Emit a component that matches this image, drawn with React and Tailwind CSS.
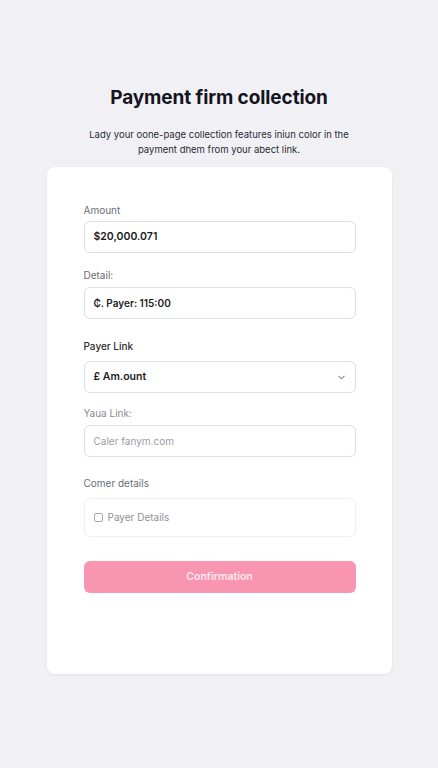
import { ChevronDown } from 'lucide-react'

const font = { fontFamily: 'Inter, "Noto Sans", sans-serif' }

function Label({ children, className = '' }) {
  return <div className={`text-[10px] leading-[14px] ${className}`}>{children}</div>
}

export default function App() {
  return (
    <div style={font} className="min-h-[768px] w-full bg-[#f1f1f5] flex flex-col items-center">
      <h1 className="mt-[85px] text-[19px] leading-[26px] font-bold text-[#15151f] tracking-[-0.1px]">
        Payment firm collection
      </h1>
      <p className="mt-[16px] w-[290px] text-center text-[9.5px] leading-[15px] text-[#2a2a33]">
        Lady your oone-page collection features iniun color in the payment dhem from your abect link.
      </p>

      <section className="mt-[10px] w-[345px] h-[507px] rounded-lg bg-white shadow-[0_1px_3px_rgba(0,0,0,0.06)] pl-[37px] pr-[36px] pt-[36px]">
        <Label className="text-[#6b6d73]">Amount</Label>
        <div className="mt-[4px] h-[32px] rounded-md border border-[#dcdfe4] flex items-center px-[9px] text-[10.5px] font-semibold text-[#1c1c22]">
          $20,000.071
        </div>

        <Label className="mt-[15px] text-[#6b6d73]">Detail:</Label>
        <div className="mt-[5px] h-[32px] rounded-md border border-[#dcdfe4] flex items-center px-[9px] text-[10px] font-semibold text-[#1c1c22]">
          ₵. Payer: 115:00
        </div>

        <Label className="mt-[20px] text-[#2c2d33] font-medium">Payer Link</Label>
        <div className="mt-[8px] h-[32px] rounded-md border border-[#dcdfe4] flex items-center justify-between pl-[9px] pr-[8px] text-[10.5px] font-semibold text-[#1c1c22]">
          <span>£ Am.ount</span>
          <ChevronDown size={11} strokeWidth={2} className="text-[#444]" />
        </div>

        <Label className="mt-[13px] text-[#8a8c92]">Yaua Link:</Label>
        <div className="mt-[5px] h-[32px] rounded-md border border-[#dcdfe4] flex items-center px-[9px] text-[10px] text-[#9b9da3]">
          Caler fanym.com
        </div>

        <Label className="mt-[19px] text-[#6b6d73]">Comer details</Label>
        <div className="mt-[8px] h-[39px] rounded-md border border-[#eef0f2] flex items-center px-[9px] gap-[5px] text-[10px] text-[#8e9096]">
          <span className="w-[9px] h-[9px] rounded-[2px] border border-[#a7a9ae]" />
          <span>Payer Details</span>
        </div>

        <button className="mt-[24px] w-full h-[32px] rounded-md bg-[#f896b2] text-[10.5px] font-semibold text-[#fde9ef]">
          Confirmation
        </button>
      </section>
    </div>
  )
}
